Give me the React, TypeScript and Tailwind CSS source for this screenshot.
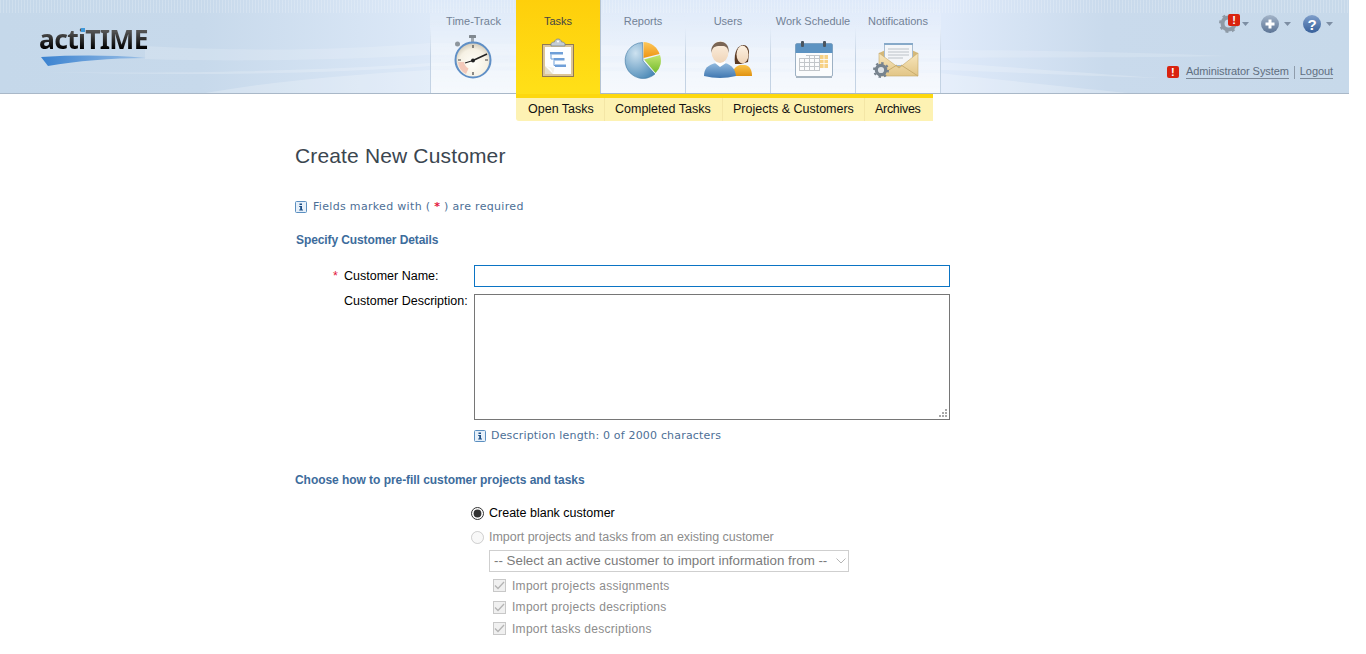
import React from "react";

const Stopwatch = () => (
  <svg width="42" height="44" viewBox="0 0 42 44">
    <defs>
      <radialGradient id="sw" cx="0.5" cy="0.6" r="0.62"><stop offset="0" stopColor="#fffef9" /><stop offset="0.65" stopColor="#f6f1e4" /><stop offset="1" stopColor="#c9c1ae" /></radialGradient>
    </defs>
    <rect x="18" y="0" width="7" height="3" rx="0.5" fill="#80888f" />
    <rect x="20" y="3" width="3" height="4" fill="#a0a8af" />
    <circle cx="6.500" cy="9" r="2.500" fill="#8d959c" />
    <circle cx="22" cy="25" r="17.500" fill="url(#sw)" stroke="#5f8fc6" strokeWidth="2" />
    <path d="M7 27 a15 15 0 0 0 8 12 l2.500-5.500 a9 9 0 0 1-4.500-6.500z" fill="#f3c9ba" />
    <g stroke="#444" strokeWidth="1.200">
      <path d="M22 10v3M22 37v3M7 25h3M34 25h3" />
    </g>
    <path d="M22 25.500 L36 19" stroke="#222" strokeWidth="1.600" />
    <path d="M22 25.500 L14 28" stroke="#222" strokeWidth="1.200" />
    <circle cx="22" cy="25.500" r="2" fill="#222" />
  </svg>
);

const Clipboard = () => (
  <svg width="34" height="40" viewBox="0 0 34 40">
    <rect x="1.500" y="6.500" width="31" height="32" fill="#dcc596" stroke="#8f7a55" />
    <rect x="4" y="9" width="26" height="27" fill="#fdfeff" />
    <path d="M4 36 V28 L12 36z" fill="#e6dfc9" />
    <path d="M4 28 Q10 29 12 36 L13.500 30z" fill="#f3f1ea" />
    <path d="M10 8 V6 C10 4.500 12 4 13.500 4 C14 0 20 0 20.500 4 C22 4 24 4.500 24 6 V8z" fill="#c5ccd2" stroke="#7e8890" strokeWidth="0.800" />
    <circle cx="17" cy="3.500" r="1" fill="#fff" />
    <rect x="9" y="14" width="13" height="2.500" fill="#6f9fd8" />
    <rect x="12.500" y="20" width="11" height="2.500" fill="#6f9fd8" />
    <rect x="14" y="26.500" width="11" height="2.500" fill="#6f9fd8" />
    <path d="M10 16.500 V21 H12.500 M13 22.500 V27.500 H14" stroke="#6f9fd8" fill="none" />
  </svg>
);

const Pie = () => (
  <svg width="38" height="38" viewBox="0 0 38 38">
    <defs>
      <radialGradient id="pb" cx="0.35" cy="0.3" r="0.85"><stop offset="0" stopColor="#cde2f0" /><stop offset="1" stopColor="#4585b4" /></radialGradient>
      <linearGradient id="po" x1="0" y1="0" x2="0" y2="1"><stop offset="0" stopColor="#fcc75a" /><stop offset="1" stopColor="#ef9412" /></linearGradient>
      <linearGradient id="pg" x1="0" y1="0" x2="0" y2="1"><stop offset="0" stopColor="#c3e56f" /><stop offset="1" stopColor="#73bb2d" /></linearGradient>
    </defs>
    <path d="M19 20 L31 33 A18 18 0 1 1 18.500 1.500z" fill="url(#pb)" stroke="#3f78a3" strokeWidth="0.600" />
    <path d="M19.500 1 A17 17 0 0 1 35.500 13 L19.500 17z" fill="url(#po)" />
    <path d="M20 18.500 L36 14 A17 17 0 0 1 31.500 32z" fill="url(#pg)" />
  </svg>
);

const Users = () => (
  <svg width="50" height="38" viewBox="0 0 50 38">
    <defs>
      <linearGradient id="sk" x1="0" y1="0" x2="0" y2="1"><stop offset="0" stopColor="#fdf1e2" /><stop offset="1" stopColor="#efd4b8" /></linearGradient>
      <linearGradient id="bs" x1="0" y1="0" x2="0" y2="1"><stop offset="0" stopColor="#93bbdf" /><stop offset="1" stopColor="#3f76b0" /></linearGradient>
      <linearGradient id="os" x1="0" y1="0" x2="0" y2="1"><stop offset="0" stopColor="#fac34a" /><stop offset="1" stopColor="#e09212" /></linearGradient>
    </defs>
    <path d="M28 36 C30 29 33 26 37 25 L42 25 C47 26 49 30 49 36z" fill="url(#os)" />
    <path d="M32 24 C29 2 47 0 46 14 L45 22 L38 24z" fill="#5b3a24" />
    <ellipse cx="39.500" cy="14.500" rx="6" ry="9" fill="url(#sk)" />
    <path d="M1 36 C1 28 5 25 13 23 L22 23 C29 25 32 29 33 36 Q17 40 1 36z" fill="url(#bs)" />
    <path d="M12 23 L17 27 L23 23 L20 19 H14z" fill="#fff" />
    <ellipse cx="17" cy="12" rx="8.500" ry="11" fill="url(#sk)" />
    <path d="M8.500 13 C6 -1 28 -3 25.500 13 C25 6 22 6 17 6 C12 6 9 7 8.500 13z" fill="#7a6555" />
  </svg>
);

const Calendar = () => (
  <svg width="38" height="38" viewBox="0 0 38 38">
    <rect x="0.500" y="2.500" width="37" height="33" rx="1.500" fill="#fbfcfd" stroke="#9db1c4" />
    <path d="M0.500 4 a1.500 1.500 0 0 1 1.500-1.500 h34 a1.500 1.500 0 0 1 1.500 1.500 V12 H0.500z" fill="#5d93c2" />
    <rect x="1" y="35" width="36" height="2" fill="#a7b5c2" />
    <rect x="6" y="0" width="3" height="6" rx="1" fill="#4a5560" />
    <rect x="28" y="0" width="3" height="6" rx="1" fill="#4a5560" />
    <g fill="none" stroke="#c2c6ca" strokeWidth="1">
      <path d="M4 17.500H25M4 21.500H32M4 25.500H32M4 29.500H25M11 14.500H25" />
      <path d="M4.500 17V30M9.500 17V30M14.500 14V30M19.500 14V30M24.500 14V30" />
    </g>
    <rect x="25" y="14" width="8" height="13" fill="#f7d184" />
    <path d="M25 18.500H33M25 22.500H33M29 14V27" stroke="#fff" strokeWidth="0.800" />
  </svg>
);

const Envelope = () => (
  <svg width="46" height="38" viewBox="0 0 46 38">
    <defs>
      <linearGradient id="ev" x1="0" y1="0" x2="0" y2="1"><stop offset="0" stopColor="#f8e7bd" /><stop offset="1" stopColor="#e2c587" /></linearGradient>
    </defs>
    <path d="M6 12 L26 3 L45 12 V35 H6z" fill="#d4b878" />
    <rect x="11.500" y="2.500" width="28" height="22" fill="#f4f6f9" stroke="#a9bdd0" />
    <rect x="11" y="2" width="29" height="2" fill="#86a9c9" />
    <path d="M15 8H36M15 11H36M15 14H36M15 17H30" stroke="#bcc2c8" />
    <path d="M6 12 L26 27 L45 12 V35 H6z" fill="url(#ev)" stroke="#c4a868" strokeWidth="0.600" />
    <path d="M6 35 L24 24M45 35 L28 24" stroke="#c9ad6e" />
    <circle cx="8" cy="29" r="4.700" fill="#dfe3e6" stroke="#77838e" strokeWidth="3.200" />
    <circle cx="8" cy="29" r="7" fill="none" stroke="#77838e" strokeWidth="2" strokeDasharray="2.400 3.100" />
  </svg>
);

const Info = () => (
  <svg width="12" height="12" viewBox="0 0 12 12" className="shrink-0">
    <rect x="0.500" y="0.500" width="11" height="11" rx="1" fill="#e6f0fa" stroke="#5b8fc0" />
    <path d="M4.500 2.500h2.500v1.600h-2.500zM4.200 5h2.800v3.500h1v1.100H4.200V8.500h1V6.100h-1z" fill="#1d4f86" />
  </svg>
);

const Alert = ({ className }: { className?: string }) => (
  <span className={"flex items-center justify-center rounded-[2px] bg-[#d9230f] text-white font-bold text-[11px] leading-none " + (className ?? "")}>!</span>
);

const Caret = () => (
  <svg width="7" height="4" viewBox="0 0 7 4"><path d="M0 0h7L3.500 4z" fill="#7d8ea3" /></svg>
);

const sep = "border-l border-transparent [border-image:linear-gradient(180deg,transparent_30%,#c4d3e4_60%)_1]";

const tabs = [
  { label: "Time-Track", icon: <Stopwatch />, cls: sep + " pt-[35px] w-[86px]", ic: "ml-[-4px]" },
  { label: "Tasks", icon: <Clipboard />, active: true, cls: "pt-[38px]", ic: "" },
  { label: "Reports", icon: <Pie />, cls: "border-l border-[#b5c3d2] pt-[41px] w-[85px]", ic: "ml-[-1px]" },
  { label: "Users", icon: <Users />, cls: sep + " pt-[40px] w-[85px]", ic: "ml-[-1px]" },
  { label: "Work Schedule", icon: <Calendar />, cls: sep + " pt-[41px] w-[85px]", ic: "ml-[1px]" },
  { label: "Notifications", icon: <Envelope />, cls: "border-x border-transparent [border-image:linear-gradient(180deg,transparent_30%,#c4d3e4_60%)_1] pt-[41px] w-[86px]", ic: "ml-[-4px]" },
];

const sub = [
  { label: "Open Tasks", w: "w-[89px] pl-[12px]" },
  { label: "Completed Tasks", w: "w-[118px] pl-[10px]" },
  { label: "Projects & Customers", w: "w-[142px] pl-[10px]" },
  { label: "Archives", w: "w-[68px] pl-[10px] tracking-[-0.3px]" },
];

const arial = "font-['Liberation_Sans',Arial,sans-serif]";
const verdana = "font-['DejaVu_Sans',Verdana,sans-serif]";

function Check({ label }: { label: string }) {
  return (
    <label className="flex items-center h-[21.500px] gap-[6px] text-[12px] tracking-[0.28px] text-[#8c8c8c]">
      <span className="w-[13px] h-[13px] border border-[#c8c8c8] bg-[#f0f0f0] flex items-center justify-center">
        <svg width="11" height="9" viewBox="0 0 11 9"><path d="M1 4.500 L4 7.500 L10 1" fill="none" stroke="#b4b4b4" strokeWidth="1.300" /></svg>
      </span>
      {label}
    </label>
  );
}

export default function App() {
  return (
    <div className={"w-[1349px] min-h-[654px] bg-white overflow-hidden " + arial}>
      <header className="relative h-[94px] border-b border-[#a9b8c8] flex bg-[linear-gradient(90deg,#c5d8ea_0%,#c7d9eb_15%,#dde9f8_32%,#dfeafa_70%,#c9daec_82%,#c7d9ea_100%)]">
        <div className="absolute inset-x-0 top-0 h-[13px] bg-[repeating-linear-gradient(90deg,rgba(255,255,255,0.18)_0,rgba(255,255,255,0.18)_1px,transparent_1px,transparent_3px)]" />
        <svg className="absolute inset-0" width="1349" height="93" viewBox="0 0 1349 93">
          <path d="M145 46 C260 52 340 50 430 43 L940 50 C1050 50 1150 53 1230 56 C1120 58 1040 57 940 58 L430 55 C340 60 240 62 145 59z" fill="#ffffff" fillOpacity="0.16" />
          <path d="M40 72 C200 74 330 70 430 63 L940 62 C1020 68 1100 74 1160 78 C1090 76 1010 72 940 70 L430 66 C330 74 180 76 40 72z" fill="#ffffff" fillOpacity="0.2" />
          <path d="M205 93 C280 80 360 74 430 70 L940 73 C1000 80 1070 87 1128 93z" fill="#ffffff" fillOpacity="0.22" />
        </svg>

        <div className="relative w-[430px] shrink-0 pl-[39px] pt-[23px]">
          <div className="relative w-fit font-['Noto_Sans',sans-serif] font-bold text-[26.500px] leading-[32px] tracking-[-0.700px] bg-[linear-gradient(180deg,#555_25%,#000_80%)] bg-clip-text text-transparent">
            actiTIME
            <span className="absolute left-[42px] top-[5px] w-[4px] h-[4px] bg-[#3f97d8]" />
          </div>
          <svg width="106" height="12" viewBox="0 0 106 12" className="mt-[0px] ml-[2px]">
            <defs><linearGradient id="sw2" x1="0" x2="1"><stop offset="0" stopColor="#3a82d0" /><stop offset="1" stopColor="#9cc0e6" /></linearGradient></defs>
            <path d="M0 2 C35 0 70 0 105 3 C70 3 35 6 7 11z" fill="url(#sw2)" />
          </svg>
        </div>

        <nav className="relative flex h-[93px]">
          {tabs.map((t) =>
            t.active ? (
              <div key={t.label} className="w-[84px] h-[94px] flex flex-col items-center bg-[linear-gradient(180deg,#fecf0b,#ffe018)] relative">
                <span className="absolute top-[15px] text-[11px] leading-[13px] text-[#444]">{t.label}</span>
                <div className={t.cls}>{t.icon}</div>
              </div>
            ) : (
              <div key={t.label} className={"h-[93px] flex flex-col items-center bg-[linear-gradient(180deg,rgba(255,255,255,0)_0%,rgba(255,255,255,0.3)_40%,rgba(255,255,255,0.65)_100%)] relative " + t.cls}>
                <span className="absolute top-[15px] text-[11px] leading-[13px] text-[#728296] whitespace-nowrap">{t.label}</span>
                <div className={t.ic}>{t.icon}</div>
              </div>
            )
          )}
        </nav>

        <div className="relative ml-auto w-[200px] shrink-0 mr-[16px] flex flex-col items-end">
          <div className="flex items-center h-[19px] mt-[14px]">
            <div className="relative w-[21px] h-[19px]">
              <svg width="19" height="19" viewBox="0 0 19 19">
                <circle cx="9.500" cy="9.500" r="6" fill="none" stroke="#8e9aa6" strokeWidth="4" />
                <circle cx="9.500" cy="9.500" r="8.500" fill="none" stroke="#8e9aa6" strokeWidth="2" strokeDasharray="3 3.700" />
              </svg>
              <Alert className="absolute left-[9px] top-0 w-[12px] h-[12px]" />
            </div>
            <span className="ml-[2px]"><Caret /></span>
            <svg width="18" height="18" viewBox="0 0 18 18" className="ml-[12px]">
              <defs><linearGradient id="g1" x1="0" y1="0" x2="0" y2="1"><stop offset="0" stopColor="#a3b4c8" /><stop offset="1" stopColor="#5c7596" /></linearGradient></defs>
              <circle cx="9" cy="9" r="9" fill="url(#g1)" />
              <path d="M7.500 4.500h3v3h3v3h-3v3h-3v-3h-3v-3h3z" fill="#fff" />
            </svg>
            <span className="ml-[5px]"><Caret /></span>
            <svg width="18" height="18" viewBox="0 0 18 18" className="ml-[12px]">
              <defs><linearGradient id="g2" x1="0" y1="0" x2="0" y2="1"><stop offset="0" stopColor="#7f9fcb" /><stop offset="1" stopColor="#37609a" /></linearGradient></defs>
              <circle cx="9" cy="9" r="9" fill="url(#g2)" />
              <text x="9" y="14.500" textAnchor="middle" fontSize="15" fontWeight="700" fill="#fff" fontFamily="Liberation Sans">?</text>
            </svg>
            <span className="ml-[5px]"><Caret /></span>
          </div>
          <div className="flex items-center mt-[32px] text-[11px] tracking-[-0.080px] text-[#5f6e80] leading-[13px]">
            <Alert className="w-[12px] h-[12px] mr-[7px]" />
            <span className="border-b border-[#7d8a99]">Administrator System</span>
            <span className="w-px h-[13px] bg-[#8f9cab] mx-[5px]" />
            <span className="border-b border-[#7d8a99]">Logout</span>
          </div>
        </div>
      </header>

      <div className="ml-[516px] w-[417px] h-[27px] flex border-t-[4px] border-[#fdd80e] bg-[#fdf2b3] rounded-bl-[3px] text-[12.500px] text-[#111]">
        {sub.map((s, i) => (
          <div key={s.label} className={"h-full flex items-center whitespace-nowrap " + s.w + (i < 3 ? " border-r border-[#f4e6a6]" : "")}>
            {s.label}
          </div>
        ))}
      </div>

      <main className="pl-[295px] text-[12.500px] text-black">
        <h1 className="text-[21px] leading-[24px] text-[#3b4650] mt-[23px] tracking-[0.150px]">Create New Customer</h1>

        <p className={"flex items-center gap-[6px] mt-[32px] text-[11px] leading-[14px] tracking-[0.320px] text-[#4d6f96] " + verdana}>
          <Info />
          <span>Fields marked with ( <span className="text-[#e3163c] font-bold">*</span> ) are required</span>
        </p>

        <h2 className="ml-px mt-[19px] font-bold text-[12px] leading-[14px] tracking-[-0.100px] text-[#3d6c9c]">Specify Customer Details</h2>

        <div className="flex items-center mt-[18px]">
          <label className="w-[179px] shrink-0 pl-[38px] flex">
            <span className="w-[11px] text-[#e3163c]">*</span>Customer Name:
          </label>
          <input type="text" className="w-[476px] h-[22px] border border-[#0b74c4] outline-none" />
        </div>

        <div className="flex mt-[7px]">
          <label className="w-[179px] shrink-0 pl-[49px] leading-[14px]">Customer Description:</label>
          <div className="relative w-[476px] h-[126px]">
            <textarea className="w-full h-full border border-[#767676] outline-none block resize-none" />
            <svg width="9" height="9" viewBox="0 0 9 9" className="absolute right-[2px] bottom-[2px]">
              <path d="M6 0h2v2H6zM3 3h2v2H3zM6 3h2v2H6zM0 6h2v2H0zM3 6h2v2H3zM6 6h2v2H6z" fill="#a8a8a8" />
            </svg>
          </div>
        </div>

        <p className={"flex items-center gap-[5px] ml-[179px] mt-[9px] text-[11px] leading-[14px] tracking-[0.180px] text-[#4d6f96] " + verdana}>
          <Info />
          <span>Description length: 0 of 2000 characters</span>
        </p>

        <h2 className="mt-[30px] font-bold text-[12px] leading-[14px] tracking-[-0.050px] text-[#3d6c9c]">Choose how to pre-fill customer projects and tasks</h2>

        <div className="ml-[176px] mt-[14px]">
          <label className="flex items-center h-[24px] gap-[5px]">
            <input type="radio" name="fill" defaultChecked className="m-0 accent-[#333333]" />
            Create blank customer
          </label>
          <label className="flex items-center h-[24px] gap-[5px] text-[#8c8c8c] tracking-[-0.030px]">
            <input type="radio" name="fill" disabled className="m-0" />
            Import projects and tasks from an existing customer
          </label>
          <div className="relative ml-[18px] mt-[1px] w-[360px] h-[22px]">
            <select disabled className="w-full h-full appearance-none border border-[#cfcfcf] pl-[4px] text-[13.330px] text-[#7b7b7b] bg-white">
              <option>-- Select an active customer to import information from --</option>
            </select>
            <svg width="10" height="6" viewBox="0 0 10 6" className="absolute right-[3px] top-[8px]"><path d="M0.500 0.500 L5 5 L9.500 0.500" fill="none" stroke="#b5b5b5" /></svg>
          </div>
          <div className="ml-[22px] mt-[3px]">
            <Check label="Import projects assignments" />
            <Check label="Import projects descriptions" />
            <Check label="Import tasks descriptions" />
          </div>
        </div>
      </main>
    </div>
  );
}
